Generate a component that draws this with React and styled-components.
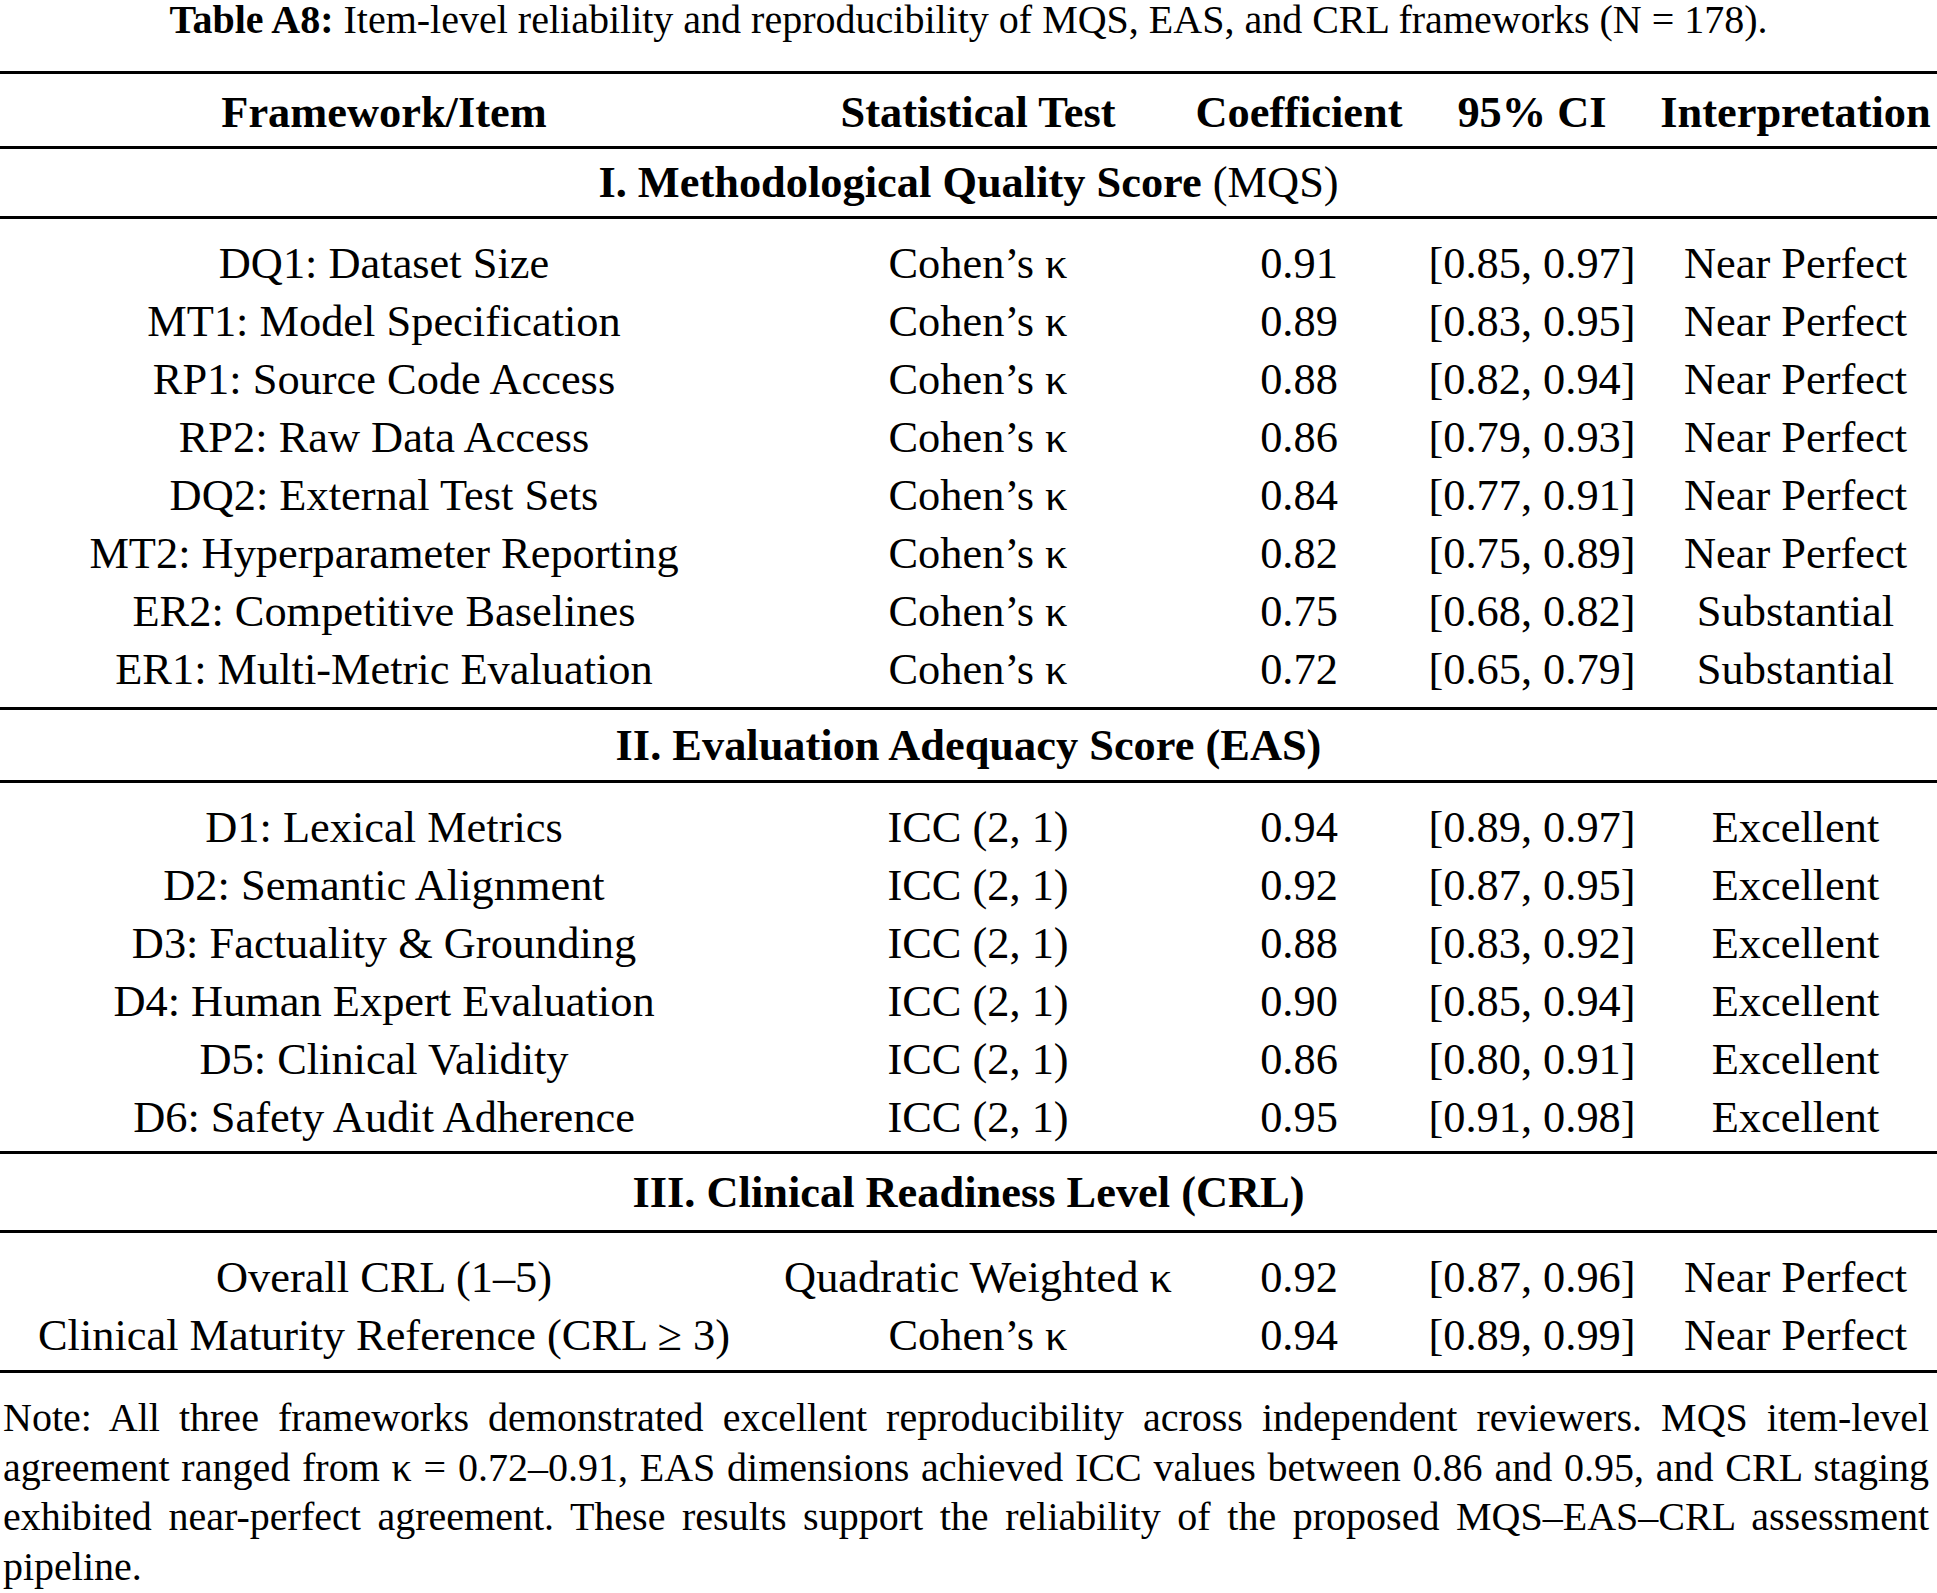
import styled, { createGlobalStyle } from 'styled-components';

const GlobalStyle = createGlobalStyle`
  html, body {
    margin: 0;
    padding: 0;
    background: #fff;
  }
  body {
    font-family: 'Liberation Serif', 'Times New Roman', serif;
    color: #000;
  }
`;

const Page = styled.div`
  width: 1937px;
`;

const Caption = styled.p`
  margin: 0;
  height: 71px;
  font-size: 40px;
  line-height: 40px;
  text-align: center;
  white-space: nowrap;
`;

const Table = styled.div`
  border-top: 3px solid #000;
  border-bottom: 3px solid #000;
`;

const Row = styled.div`
  display: grid;
  grid-template-columns: 768px 420px 222px 244px 283px;
  font-size: 44.4px;
  line-height: ${p => (p.$head ? '68px' : '58px')};
  padding-top: ${p => (p.$head ? '4px' : '0')};
  font-weight: ${p => (p.$head ? 700 : 400)};
  text-align: center;
  white-space: nowrap;
  ${p => p.$head && 'border-bottom: 3px solid #000;'}
`;

const Cell = styled.div`
  text-align: center;
`;

const SectionHead = styled.div`
  height: ${p => p.$h}px;
  line-height: ${p => p.$h}px;
  font-size: 44.4px;
  font-weight: 700;
  text-align: center;
  border-bottom: 3px solid #000;
`;

const Light = styled.span`
  font-weight: 400;
`;

const Body = styled.div`
  padding: 15px 0 ${p => p.$pb}px;
  ${p => !p.$last && 'border-bottom: 3px solid #000;'}
`;

const Note = styled.div`
  padding: 20px 8px 0 3px;
  font-size: 40px;
  line-height: 49.5px;
`;

const NoteLine = styled.div`
  text-align: justify;
  text-align-last: ${p => (p.$end ? 'left' : 'justify')};
  white-space: nowrap;
`;

const K = 'Cohen’s κ';
const ICC = 'ICC (2, 1)';

const sections = [
  {
    title: (
      <>
        I. Methodological Quality Score <Light>(MQS)</Light>
      </>
    ),
    h: 67,
    pb: 9,
    rows: [
      ['DQ1: Dataset Size', K, '0.91', '[0.85, 0.97]', 'Near Perfect'],
      ['MT1: Model Specification', K, '0.89', '[0.83, 0.95]', 'Near Perfect'],
      ['RP1: Source Code Access', K, '0.88', '[0.82, 0.94]', 'Near Perfect'],
      ['RP2: Raw Data Access', K, '0.86', '[0.79, 0.93]', 'Near Perfect'],
      ['DQ2: External Test Sets', K, '0.84', '[0.77, 0.91]', 'Near Perfect'],
      ['MT2: Hyperparameter Reporting', K, '0.82', '[0.75, 0.89]', 'Near Perfect'],
      ['ER2: Competitive Baselines', K, '0.75', '[0.68, 0.82]', 'Substantial'],
      ['ER1: Multi-Metric Evaluation', K, '0.72', '[0.65, 0.79]', 'Substantial'],
    ],
  },
  {
    title: 'II. Evaluation Adequacy Score (EAS)',
    h: 70,
    pb: 5,
    rows: [
      ['D1: Lexical Metrics', ICC, '0.94', '[0.89, 0.97]', 'Excellent'],
      ['D2: Semantic Alignment', ICC, '0.92', '[0.87, 0.95]', 'Excellent'],
      ['D3: Factuality & Grounding', ICC, '0.88', '[0.83, 0.92]', 'Excellent'],
      ['D4: Human Expert Evaluation', ICC, '0.90', '[0.85, 0.94]', 'Excellent'],
      ['D5: Clinical Validity', ICC, '0.86', '[0.80, 0.91]', 'Excellent'],
      ['D6: Safety Audit Adherence', ICC, '0.95', '[0.91, 0.98]', 'Excellent'],
    ],
  },
  {
    title: 'III. Clinical Readiness Level (CRL)',
    h: 76,
    pb: 6,
    rows: [
      ['Overall CRL (1–5)', 'Quadratic Weighted κ', '0.92', '[0.87, 0.96]', 'Near Perfect'],
      ['Clinical Maturity Reference (CRL ≥ 3)', K, '0.94', '[0.89, 0.99]', 'Near Perfect'],
    ],
  },
];

const headers = ['Framework/Item', 'Statistical Test', 'Coefficient', '95% CI', 'Interpretation'];

const noteLines = [
  'Note: All three frameworks demonstrated excellent reproducibility across independent reviewers. MQS item-level',
  'agreement ranged from κ = 0.72–0.91, EAS dimensions achieved ICC values between 0.86 and 0.95, and CRL staging',
  'exhibited near-perfect agreement. These results support the reliability of the proposed MQS–EAS–CRL assessment',
  'pipeline.',
];

export default function App() {
  return (
    <Page>
      <GlobalStyle />
      <Caption>
        <b>Table A8:</b> Item-level reliability and reproducibility of MQS, EAS, and CRL frameworks (N = 178).
      </Caption>
      <Table>
        <Row $head>
          {headers.map(h => (
            <Cell key={h}>{h}</Cell>
          ))}
        </Row>
        {sections.map((s, i) => (
          <div key={i}>
            <SectionHead $h={s.h}>{s.title}</SectionHead>
            <Body $pb={s.pb} $last={i === sections.length - 1}>
              {s.rows.map(r => (
                <Row key={r[0]}>
                  {r.map((c, j) => (
                    <Cell key={j}>{c}</Cell>
                  ))}
                </Row>
              ))}
            </Body>
          </div>
        ))}
      </Table>
      <Note>
        {noteLines.map((l, i) => (
          <NoteLine key={i} $end={i === noteLines.length - 1}>
            {l}
          </NoteLine>
        ))}
      </Note>
    </Page>
  );
}
